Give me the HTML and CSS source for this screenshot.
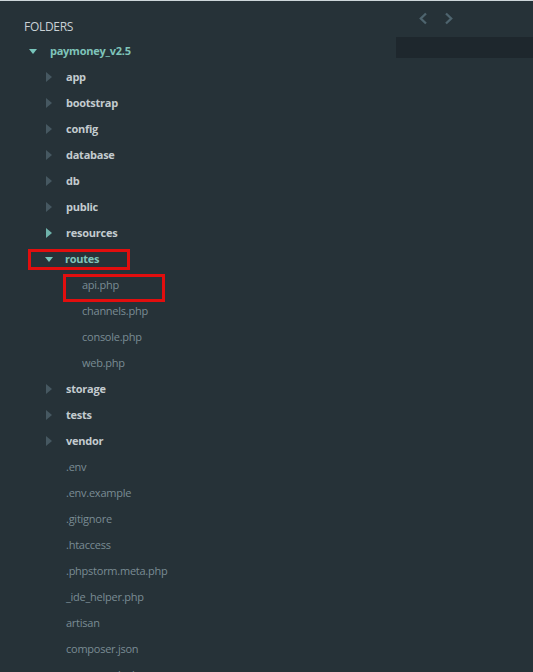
FILE: index.html
```html
<!DOCTYPE html>
<html>
<head>
<meta charset="utf-8">
<link rel="stylesheet" href="styles.css">
</head>
<body>
<div class="app">
  <aside class="sidebar">
    <div class="title">FOLDERS</div>
    <ul class="tree">
      <li class="row lvl0 open teal"><span class="tw down"></span><span class="name">paymoney_v2.5</span></li>
      <li class="row lvl1 folder"><span class="tw right"></span><span class="name">app</span></li>
      <li class="row lvl1 folder"><span class="tw right"></span><span class="name">bootstrap</span></li>
      <li class="row lvl1 folder"><span class="tw right"></span><span class="name">config</span></li>
      <li class="row lvl1 folder"><span class="tw right"></span><span class="name">database</span></li>
      <li class="row lvl1 folder"><span class="tw right"></span><span class="name">db</span></li>
      <li class="row lvl1 folder"><span class="tw right"></span><span class="name">public</span></li>
      <li class="row lvl1 folder"><span class="tw right hot"></span><span class="name">resources</span></li>
      <li class="row lvl1 open teal mark-folder"><span class="tw down"></span><span class="name">routes</span></li>
      <li class="row lvl2 file mark-file"><span class="name">api.php</span></li>
      <li class="row lvl2 file"><span class="name">channels.php</span></li>
      <li class="row lvl2 file"><span class="name">console.php</span></li>
      <li class="row lvl2 file"><span class="name">web.php</span></li>
      <li class="row lvl1 folder"><span class="tw right"></span><span class="name">storage</span></li>
      <li class="row lvl1 folder"><span class="tw right"></span><span class="name">tests</span></li>
      <li class="row lvl1 folder"><span class="tw right"></span><span class="name">vendor</span></li>
      <li class="row lvl1 file"><span class="name">.env</span></li>
      <li class="row lvl1 file"><span class="name">.env.example</span></li>
      <li class="row lvl1 file"><span class="name">.gitignore</span></li>
      <li class="row lvl1 file"><span class="name">.htaccess</span></li>
      <li class="row lvl1 file"><span class="name">.phpstorm.meta.php</span></li>
      <li class="row lvl1 file"><span class="name">_ide_helper.php</span></li>
      <li class="row lvl1 file"><span class="name">artisan</span></li>
      <li class="row lvl1 file"><span class="name">composer.json</span></li>
      <li class="row lvl1 file"><span class="name">composer.lock</span></li>
    </ul>
  </aside>
  <main class="editor">
    <div class="nav">
      <svg class="chev" width="10" height="13" viewBox="0 0 10 13"><path d="M8 1.5 L2.8 6.5 L8 11.5" fill="none" stroke="#4e646e" stroke-width="2.3"/></svg>
      <svg class="chev" width="10" height="13" viewBox="0 0 10 13"><path d="M2 1.5 L7.2 6.5 L2 11.5" fill="none" stroke="#4e646e" stroke-width="2.3"/></svg>
    </div>
    <div class="tabbar"></div>
  </main>
</div>
</body>
</html>
```
FILE: styles.css
```css
html, body {
  margin: 0;
  padding: 0;
  background: #263238;
  height: 100%;
  overflow: hidden;
}
body {
  border-top: 1px solid #cdd6da;
  font-family: "Open Sans", "Noto Sans", "Liberation Sans", sans-serif;
  font-size: 11px;
  letter-spacing: -0.25px;
}
.app {
  display: flex;
  height: 100%;
}
.sidebar {
  width: 396px;
  flex: none;
  padding-top: 18px;
}
.title {
  padding-left: 24px;
  color: #c9d1d5;
  font-size: 12px;
  height: 16px;
  line-height: 16px;
  margin-bottom: 3px;
  letter-spacing: -0.3px;
}
.tree {
  list-style: none;
  margin: 0;
  padding: 0;
}
.row {
  position: relative;
  display: flex;
  align-items: center;
  height: 26px;
  line-height: 26px;
  white-space: nowrap;
}
.lvl0 { padding-left: 29px; }
.lvl1 { padding-left: 46px; }
.lvl1.open { padding-left: 45px; }
.lvl2 { padding-left: 82px; }
.lvl1.file { padding-left: 66px; }
.tw {
  display: inline-block;
  width: 0;
  height: 0;
  flex: none;
}
.tw.right {
  border-top: 5px solid transparent;
  border-bottom: 5px solid transparent;
  border-left: 6px solid #465861;
  margin-right: 14px;
}
.tw.right.hot {
  border-left-color: #6fb3ab;
}
.tw.down {
  border-left: 4px solid transparent;
  border-right: 4px solid transparent;
  border-top: 5px solid #78c5bb;
  margin-right: 13px;
}
.lvl1.open .tw.down { margin-right: 12px; }
.folder .name {
  color: #c3cbcf;
  font-weight: bold;
}
.teal .name {
  color: #7fc4ba;
  font-weight: bold;
}
.file .name {
  color: #7a8c94;
}
.mark-folder::after {
  content: "";
  position: absolute;
  left: 28px;
  top: 3px;
  width: 96px;
  height: 15px;
  border: 3px solid #e20e0e;
}
.mark-file::after {
  content: "";
  position: absolute;
  left: 63px;
  top: 2px;
  width: 96px;
  height: 22px;
  border: 3px solid #e20e0e;
}
.editor {
  flex: 1;
  display: flex;
  flex-direction: column;
}
.nav {
  height: 36px;
  display: flex;
  align-items: center;
  gap: 16px;
  padding-left: 418px;
  margin-left: -396px;
}
.chev { display: block; margin-top: -1px; }
.tabbar {
  height: 21px;
  background: #1e272d;
}
```
